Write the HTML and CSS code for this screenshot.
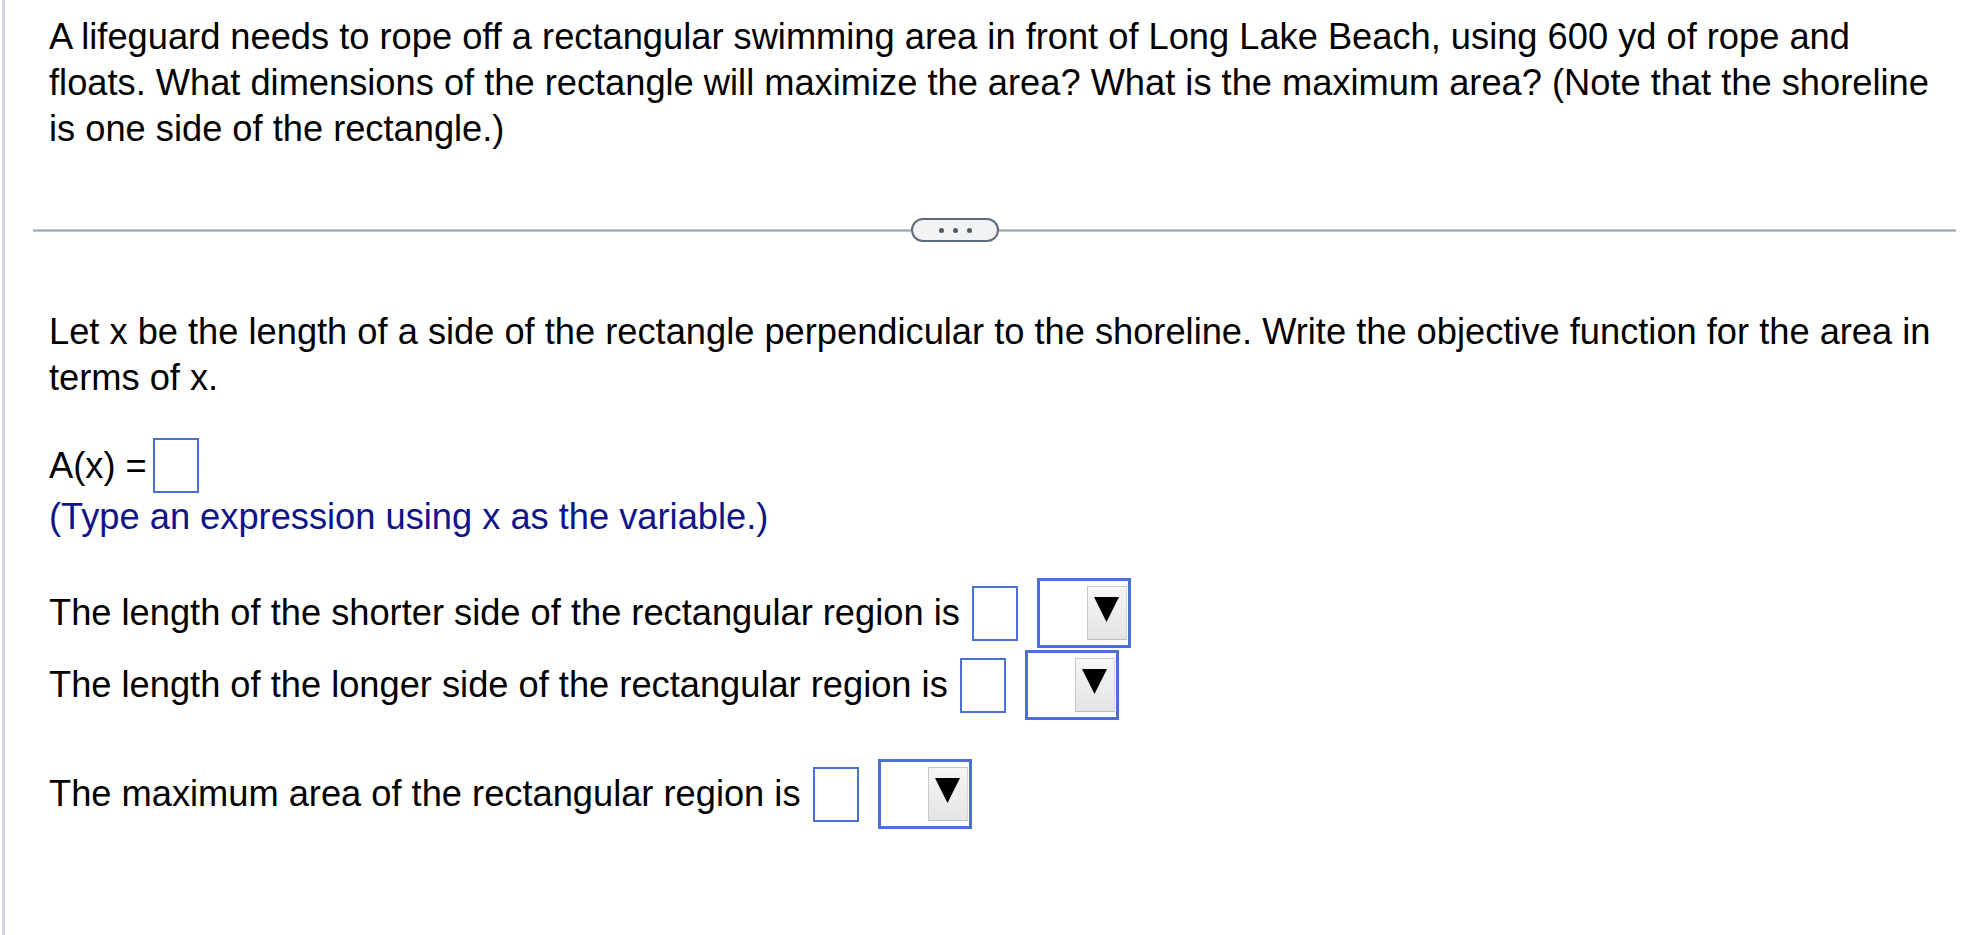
FILE: index.html
```html
<!DOCTYPE html>
<html lang="en">
<head>
<meta charset="utf-8">
<title>Lifeguard rope problem</title>
<link rel="stylesheet" href="styles.css">
</head>
<body>
<div class="page">
  <div class="question">
    <p class="stem">A lifeguard needs to rope off a rectangular swimming area in front of Long Lake Beach, using 600 yd of rope and floats. What dimensions of the rectangle will maximize the area? What is the maximum area? (Note that the shoreline is one side of the rectangle.)</p>
  </div>

  <div class="sep">
    <span class="sep-line sep-left"></span>
    <span class="more"><i></i><i></i><i></i></span>
    <span class="sep-line sep-right"></span>
  </div>

  <div class="question">
    <p class="prompt">Let x be the length of a side of the rectangle perpendicular to the shoreline. Write the objective function for the area in terms of x.</p>

    <div class="ans-row row-fx">
      <span class="label">A(x) =</span>
      <span class="box box-tight"></span>
    </div>
    <p class="hint">(Type an expression using x as the variable.)</p>

    <div class="ans-row row-short">
      <span class="label">The length of the shorter side of the rectangular region is</span>
      <span class="box"></span>
      <span class="select"><span class="select-btn"><svg width="25" height="25" viewBox="0 0 25 25"><polygon points="0,0 25,0 12.5,25" fill="#000"/></svg></span></span>
    </div>
    <div class="ans-row row-long">
      <span class="label">The length of the longer side of the rectangular region is</span>
      <span class="box"></span>
      <span class="select"><span class="select-btn"><svg width="25" height="25" viewBox="0 0 25 25"><polygon points="0,0 25,0 12.5,25" fill="#000"/></svg></span></span>
    </div>

    <div class="ans-row row-area">
      <span class="label">The maximum area of the rectangular region is</span>
      <span class="box"></span>
      <span class="select"><span class="select-btn"><svg width="25" height="25" viewBox="0 0 25 25"><polygon points="0,0 25,0 12.5,25" fill="#000"/></svg></span></span>
    </div>
  </div>
</div>
</body>
</html>
```

FILE: styles.css
```css
html, body {
  margin: 0;
  padding: 0;
  background: #ffffff;
}

body {
  font-family: "Liberation Sans", Arial, Helvetica, sans-serif;
  font-size: 36.25px;
  line-height: 46px;
  color: #000000;
}

.page {
  margin-left: 2px;
  border-left: 3px solid #d3d6e2;
  min-height: 100vh;
  box-sizing: border-box;
  padding: 14px 28px 0 28px;
}

.question {
  padding: 0 14px 0 16px;
}

p {
  margin: 0;
}

/* separator with "more" pill */
.sep {
  display: flex;
  align-items: center;
  height: 24px;
  margin-top: 66px;
}

.sep-line {
  height: 3px;
  background: #9aa1b0;
  border-top: 1px solid #c4c8d2;
  border-bottom: 1px solid #c4c8d2;
  box-sizing: border-box;
}

.sep-left {
  flex: 0 0 878px;
}

.sep-right {
  flex: 1 1 auto;
}

.more {
  box-sizing: border-box;
  width: 88px;
  height: 24px;
  border: 2px solid #5c6b7e;
  border-radius: 12px;
  background: #f1f2f4;
  display: flex;
  align-items: center;
  justify-content: center;
  gap: 9px;
}

.more i {
  display: block;
  width: 5px;
  height: 5px;
  border-radius: 50%;
  background: #505a66;
}

.prompt {
  margin-top: 67px;
}

.hint {
  color: #10148a;
  margin-top: 1px;
}

/* answer rows */
.ans-row {
  display: flex;
  align-items: center;
}

.row-fx {
  margin-top: 37px;
}

.row-short {
  margin-top: 38px;
}

.row-long {
  margin-top: 2px;
}

.row-area {
  margin-top: 39px;
}

.label {
  white-space: nowrap;
}

.box {
  box-sizing: border-box;
  width: 46px;
  height: 55px;
  border: 2px solid #4a70d4;
  background: #ffffff;
  margin-left: 12px;
}

.box-tight {
  margin-left: 6px;
}

.select {
  box-sizing: border-box;
  width: 94px;
  height: 70px;
  border: 3px solid #4a70d4;
  background: #ffffff;
  margin-left: 19px;
  display: flex;
  align-items: center;
  justify-content: flex-end;
  padding-right: 1px;
}

.select-btn {
  box-sizing: border-box;
  width: 40px;
  height: 54px;
  border: 1px solid #c9c9c9;
  border-right-color: #d6d6d6;
  border-bottom-color: #bdbdbd;
  background: linear-gradient(#f6f6f6, #e4e4e4);
  display: flex;
  justify-content: center;
  align-items: flex-start;
  padding-top: 10px;
}

.select-btn svg {
  display: block;
}
```
